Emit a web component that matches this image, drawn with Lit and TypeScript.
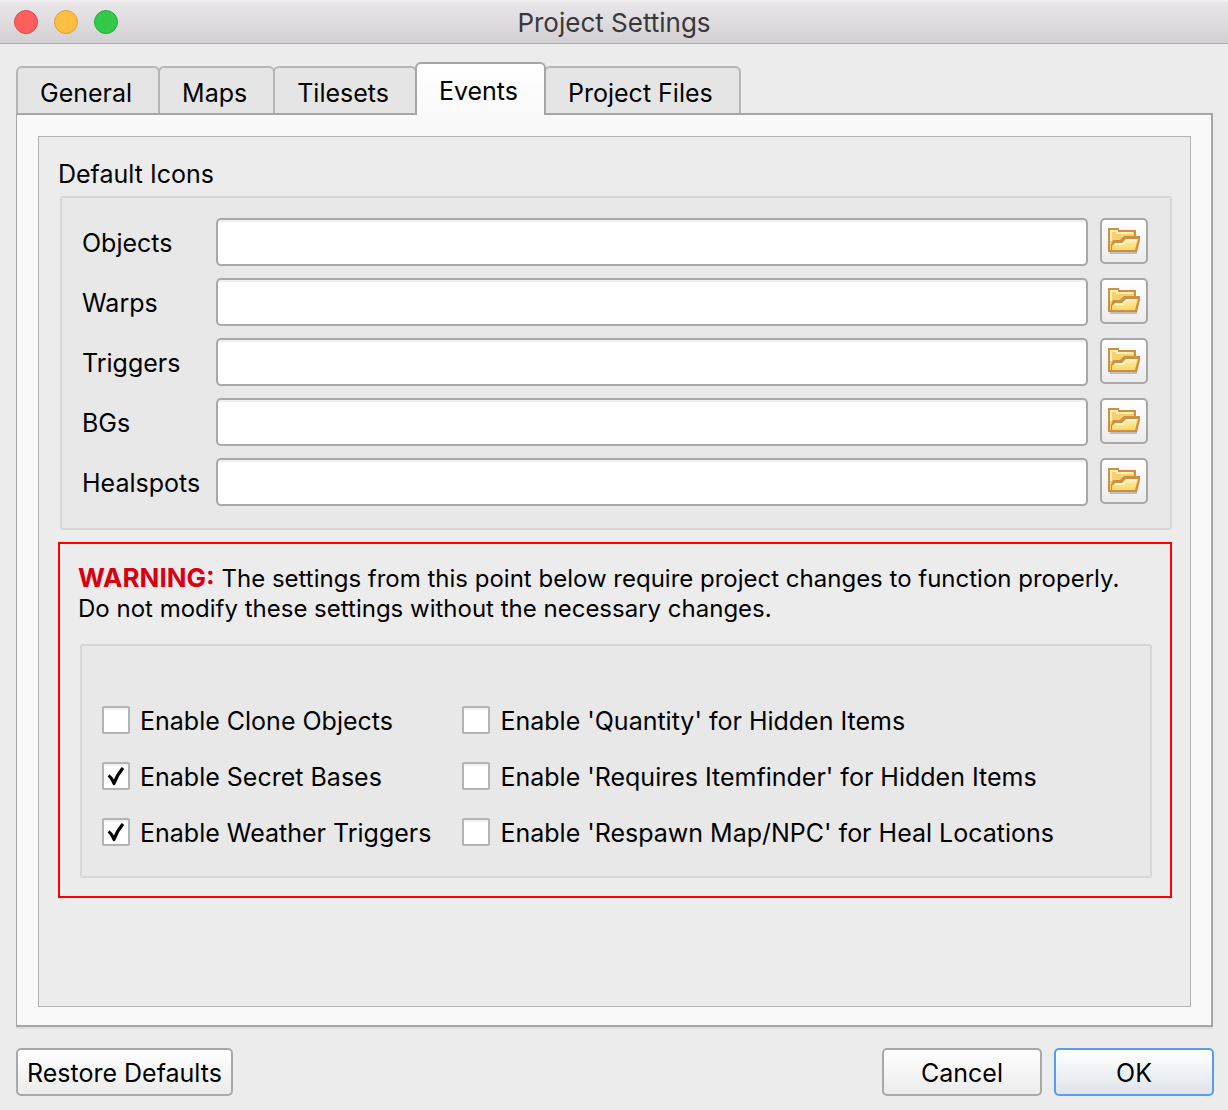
import { LitElement, html, css, svg } from "lit";
import { customElement, state } from "lit/decorators.js";

const folder = html`<svg class="folder" viewBox="0 0 32 32" aria-hidden="true">
  ${svg`
  <defs>
    <linearGradient id="g" x1="0" y1="0" x2="0" y2="1">
      <stop offset="0" stop-color="#fff0a4"/><stop offset="1" stop-color="#fbd768"/>
    </linearGradient>
  </defs>
  <path d="M2 28h27" stroke="#bdbdbd" stroke-width="2"/>
  <path d="M0 27V3h11v2h17v6h4v4l-3 12z" fill="#cd9040"/>
  <path d="M2 25V5h8v2h16v4H16l-4 4H5l-2 5v5z" fill="#f6d070"/>
  <path d="M3 16V6h6v2h16" fill="none" stroke="#fff0b4" stroke-width="2"/>
  <path d="M4 25v-4l3-3h7l4-4h12l-3 11z" fill="url(#g)"/>
  <path d="M7 19h8l4-4h9" fill="none" stroke="#fff7cf" stroke-width="2"/>`}
</svg>`;

const ICON_ROWS = ["Objects", "Warps", "Triggers", "BGs", "Healspots"];
const TABS = ["General", "Maps", "Tilesets", "Events", "Project Files"];
const OPTIONS: [string, boolean][] = [
  ["Enable Clone Objects", false],
  ["Enable 'Quantity' for Hidden Items", false],
  ["Enable Secret Bases", true],
  ["Enable 'Requires Itemfinder' for Hidden Items", false],
  ["Enable Weather Triggers", true],
  ["Enable 'Respawn Map/NPC' for Heal Locations", false],
];

@customElement("app-root")
export class AppRoot extends LitElement {
  @state() private tab = "Events";

  static styles = css`
    :host {
      display: flex;
      flex-direction: column;
      min-height: 100vh;
      background: #ececec;
      color: #000;
      font: 25px/32px Inter, "Liberation Sans", sans-serif;
    }
    *, *::before, *::after { box-sizing: border-box; }
    button, input { font: inherit; color: inherit; margin: 0; }
    .titlebar {
      display: grid;
      grid-template-columns: 1fr auto 1fr;
      align-items: center;
      height: 44px;
      padding: 0 14px;
      border-bottom: 1px solid #adabad;
      background: linear-gradient(#f4f3f4 0, #e8e6e8 3px, #d2d0d2 100%);
    }
    .lights { display: flex; gap: 16px; }
    .light { width: 24px; height: 24px; padding: 0; border-radius: 50%; border: 1px solid; }
    .close { background: #fd605c; border-color: #e2484a; }
    .minimize { background: #fdbf41; border-color: #e0a032; }
    .zoom { background: #34c84a; border-color: #24ad38; }
    .title { margin: 0; padding-top: 2px; font-size: 26px; font-weight: 400; color: #39373a; }
    .body { flex: 1; display: flex; flex-direction: column; padding: 18px 15px 14px 16px; }
    .tabs { display: flex; align-items: flex-end; height: 53px; margin-bottom: -2px; }
    .tab {
      height: 49px;
      padding: 5px 26px 0 22px;
      border: 2px solid #b6b6b6;
      border-bottom-color: #a6a6a6;
      border-radius: 6px 6px 0 0;
      background: #e5e5e5;
      white-space: nowrap;
    }
    .tab + .tab { margin-left: -2px; }
    .tab.active {
      position: relative;
      height: 53px;
      border-color: #a6a6a6;
      border-bottom: 0;
      padding-top: 3px;
      background: linear-gradient(#fff, #f9f9f9);
    }
    .pane {
      flex: 1;
      display: flex;
      padding: 21px 20px 18px 21px;
      border: 2px solid #a6a6a6;
      border-left-width: 1px;
      background: #f9f9f9;
      box-shadow: 0 2px 0 #dedede;
    }
    .sheet { flex: 1; padding: 21px 18px 20px 19px; border: 1px solid #b3b3b3; background: #ececec; }
    .heading { margin: 0; font-size: 25px; font-weight: 400; }
    .group { border: 2px solid #d6d6d6; border-radius: 3px; background: #e8e8e8; }
    .icons {
      display: grid;
      grid-template-columns: max-content 1fr 48px;
      gap: 12px;
      margin: 6px 0 0 2px;
      padding: 20px 22px 22px 20px;
    }
    .path {
      min-width: 0;
      width: 100%;
      height: 48px;
      padding: 0 8px;
      border: 2px solid #a8a8a8;
      border-radius: 5px;
      background: #fff;
      box-shadow: inset 0 2px 0 #f0f0f0;
    }
    .label { align-self: center; min-width: 122px; padding-top: 2px; }
    .button {
      border: 2px solid #a8a8a8;
      border-radius: 5px;
      background: linear-gradient(#fff, #ebebeb);
    }
    .browse { display: grid; place-items: center; width: 48px; height: 46px; padding: 0; }
    .folder { width: 32px; height: 32px; }
    .warning { margin-top: 12px; padding: 20px 18px 18px 18px; border: 2px solid #f00; }
    .message { margin: 0; font-size: 24px; line-height: 30px; }
    .alert { font-size: 26px; line-height: 24px; color: #d8000f; }
    .options {
      display: grid;
      grid-template-columns: max-content 1fr;
      gap: 22px 31px;
      margin: 20px 0 0 2px;
      padding: 57px 20px 27px;
    }
    .option { display: flex; align-items: center; gap: 10px; }
    .text { padding-top: 2px; }
    .check {
      appearance: none;
      width: 28px;
      height: 28px;
      margin: 0;
      border: 2px solid #b4b4b4;
      border-radius: 2px;
      background: #fff;
      box-shadow: inset 0 2px 1px #f0f0f0;
    }
    .box { display: grid; flex: none; }
    .box > * { grid-area: 1 / 1; }
    .tick { width: 28px; height: 28px; pointer-events: none; z-index: 1; visibility: hidden; }
    .check:checked + .tick { visibility: visible; }
    .footer { display: flex; gap: 12px; margin: 21px -1px 0 0; }
    .action { height: 48px; min-width: 160px; padding: 2px 9px 0; }
    .restore { margin-right: auto; }
    .default { border-color: #579ee8; background: linear-gradient(#fff, #dfe4eb); }
  `;

  render() {
    return html`
      <header class="titlebar">
        <div class="lights">
          <button class="light close" aria-label="Close"></button>
          <button class="light minimize" aria-label="Minimize"></button>
          <button class="light zoom" aria-label="Zoom"></button>
        </div>
        <h1 class="title">Project Settings</h1>
      </header>
      <main class="body">
        <div class="tabs" role="tablist">
          ${TABS.map((t) => html`<button role="tab" class="tab ${t === this.tab ? "active" : ""}"
            aria-selected=${t === this.tab} @click=${() => (this.tab = t)}>${t}</button>`)}
        </div>
        <div class="pane" role="tabpanel">
          <div class="sheet">
            <h2 class="heading">Default Icons</h2>
            <div class="group icons">
              ${ICON_ROWS.map((r) => html`
                <label class="label" for=${r}>${r}</label>
                <input class="path" type="text" id=${r} />
                <button class="button browse" aria-label="Browse ${r}">${folder}</button>`)}
            </div>
            <section class="warning">
              <p class="message"><strong class="alert">WARNING:</strong> The settings from this point below require project changes to function properly.<br />Do not modify these settings without the necessary changes.</p>
              <div class="group options">
                ${OPTIONS.map(([text, on]) => html`
                  <label class="option">
                    <span class="box">
                      <input class="check" type="checkbox" .checked=${on} />
                      <svg class="tick" viewBox="0 0 28 28" aria-hidden="true">
                        <path d="M6.500 13.500 Q9.500 15.500 12 21.500 Q15 13 21 6" fill="none" stroke="#000" stroke-width="3.200" stroke-linejoin="round"/>
                      </svg>
                    </span>
                    <span class="text">${text}</span>
                  </label>`)}
              </div>
            </section>
          </div>
        </div>
        <footer class="footer">
          <button class="button action restore">Restore Defaults</button>
          <button class="button action">Cancel</button>
          <button class="button action default">OK</button>
        </footer>
      </main>
    `;
  }
}
